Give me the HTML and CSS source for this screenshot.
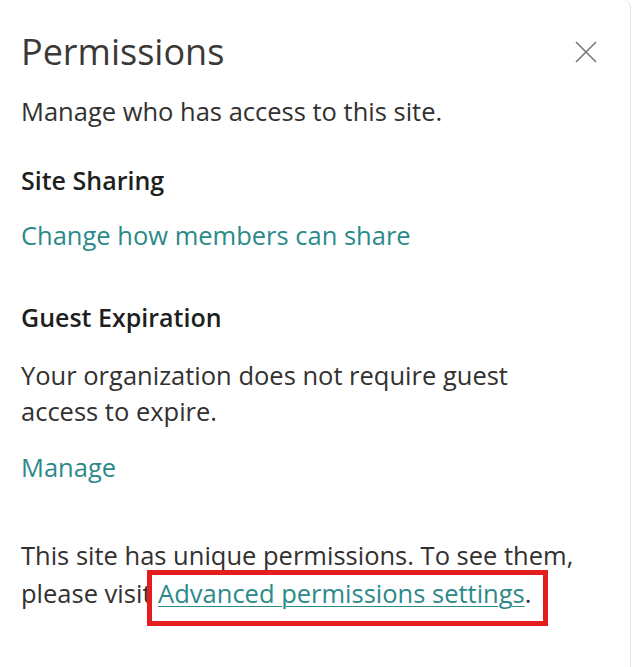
FILE: index.html
```html
<!DOCTYPE html>
<html lang="en">
<head>
<meta charset="utf-8">
<title>Permissions</title>
<link rel="stylesheet" href="styles.css">
</head>
<body>
<div class="panel">
  <header class="panel-header">
    <h1 class="panel-title">Permissions</h1>
    <button class="close-btn" aria-label="Close">
      <svg width="24" height="24" viewBox="0 0 24 24" aria-hidden="true">
        <path d="M2 2 L22 22 M22 2 L2 22" stroke="#7a7876" stroke-width="1.6" fill="none"/>
      </svg>
    </button>
  </header>
  <p class="intro">Manage who has access to this site.</p>

  <section class="section">
    <h2 class="section-title">Site Sharing</h2>
    <a class="link" href="#">Change how members can share</a>
  </section>

  <section class="section guest">
    <h2 class="section-title">Guest Expiration</h2>
    <p class="text">Your organization does not require guest access to expire.</p>
    <a class="link" href="#">Manage</a>
  </section>

  <p class="text unique">This site has unique permissions. To see them, please visit <span class="highlight"><a class="link underline" href="#">Advanced permissions settings</a></span>.</p>
</div>
</body>
</html>
```

FILE: styles.css
```css
html, body {
  margin: 0;
  padding: 0;
  background: #ffffff;
}

body {
  font-family: "Open Sans", "Noto Sans", sans-serif;
  color: #323130;
}

.panel {
  box-sizing: border-box;
  width: 631px;
  height: 667px;
  border-right: 1px solid #e3e3e3;
  border-top-right-radius: 8px;
  padding: 26px 0 0 21px;
}

.panel-header {
  display: flex;
  align-items: center;
  justify-content: space-between;
  padding-right: 32px;
}

.panel-title {
  margin: 0;
  font-size: 36px;
  font-weight: 400;
  line-height: 52px;
  color: #3a3938;
}

.close-btn {
  border: none;
  background: none;
  padding: 0;
  width: 24px;
  height: 24px;
  display: flex;
}

.intro {
  margin: 15px 0 0 0;
  font-size: 25.5px;
  line-height: 36px;
}

.section {
  margin-top: 33px;
  display: flex;
  flex-direction: column;
  align-items: flex-start;
}

.section-title {
  margin: 0;
  font-size: 25px;
  font-weight: 600;
  line-height: 36px;
  color: #201f1e;
}

.section .link {
  margin-top: 19px;
}

.section.guest {
  margin-top: 46px;
}

.guest .text {
  margin: 22px 0 0 0;
}

.guest .link {
  margin-top: 20px;
}

.text {
  font-size: 25.5px;
  line-height: 36px;
  max-width: 560px;
}

.link {
  font-size: 25.5px;
  line-height: 36px;
  color: #2b8a89;
  text-decoration: none;
}

.underline {
  text-decoration: underline;
  text-underline-offset: 3px;
  text-decoration-thickness: 1px;
}

.unique {
  margin: 51px 0 0 0;
  line-height: 38px;
}

.highlight {
  position: relative;
}

.highlight::after {
  content: "";
  position: absolute;
  left: -11px;
  right: -23px;
  top: -6px;
  bottom: -16px;
  border: 5px solid #e41d1f;
  pointer-events: none;
}
```
